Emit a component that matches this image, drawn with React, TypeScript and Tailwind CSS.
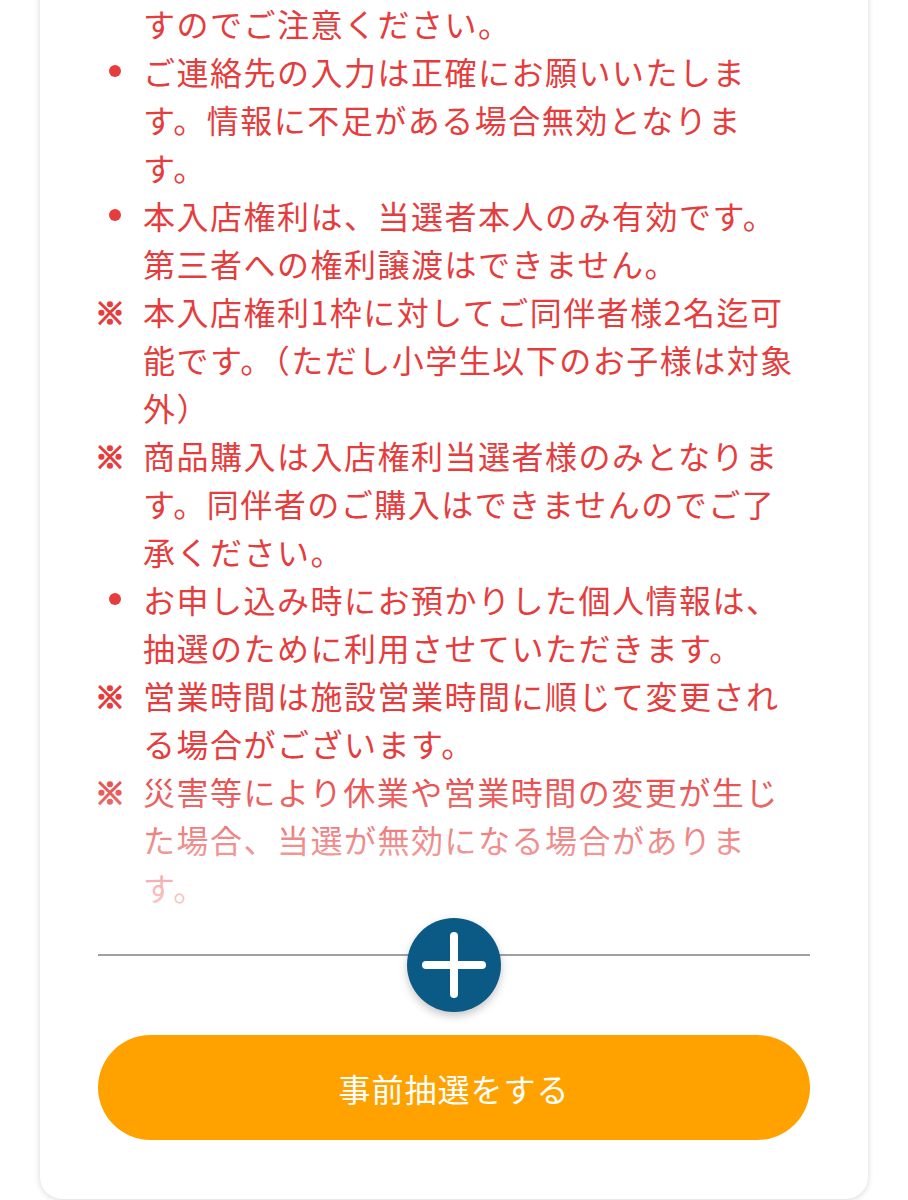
import React from "react";

type Item = { marker: "dot" | "kome" | "none"; lines: string[] };

const items: Item[] = [
  { marker: "none", lines: ["すのでご注意ください。"] },
  { marker: "dot", lines: ["ご連絡先の入力は正確にお願いいたしま", "す。情報に不足がある場合無効となりま", "す。"] },
  { marker: "dot", lines: ["本入店権利は、当選者本人のみ有効です。", "第三者への権利譲渡はできません。"] },
  { marker: "kome", lines: ["本入店権利1枠に対してご同伴者様2名迄可", "能です。（ただし小学生以下のお子様は対象", "外）"] },
  { marker: "kome", lines: ["商品購入は入店権利当選者様のみとなりま", "す。同伴者のご購入はできませんのでご了", "承ください。"] },
  { marker: "dot", lines: ["お申し込み時にお預かりした個人情報は、", "抽選のために利用させていただきます。"] },
  { marker: "kome", lines: ["営業時間は施設営業時間に順じて変更され", "る場合がございます。"] },
  { marker: "kome", lines: ["災害等により休業や営業時間の変更が生じ", "た場合、当選が無効になる場合がありま", "す。"] },
];

function Marker({ kind }: { kind: Item["marker"] }) {
  if (kind === "dot") {
    return (
      <div className="h-[48px] flex items-center">
        <div className="ml-[11px] w-[12px] h-[12px] rounded-full bg-[#e53d3d]" />
      </div>
    );
  }
  if (kind === "kome") {
    return (
      <div className="h-[48px] flex items-center">
        <span className="ml-[-3px] text-[30px] font-bold leading-none text-[#e53d3d] [-webkit-text-stroke:1.6px_#e53d3d]">
          ※
        </span>
      </div>
    );
  }
  return <div />;
}

export default function App() {
  return (
    <div
      className="min-h-[1200px] bg-white overflow-hidden"
      style={{ fontFamily: '"Noto Sans CJK JP", "Noto Sans", sans-serif' }}
    >
      <div className="mx-[40px] mt-[-40px] w-[828px] rounded-b-[22px] bg-white shadow-[0_1px_6px_rgba(0,0,0,0.16)] px-[58px] pt-[39px] pb-[59px]">
        <div className="relative">
          <ul className="flex flex-col">
            {items.map((it, i) => (
              <li key={i} className="grid grid-cols-[45px_666px]">
                <Marker kind={it.marker} />
                <div className="text-[32px] leading-[48px] tracking-[1.5px] text-[#e53d3d]">
                  {it.lines.map((l, j) => (
                    <div key={j} className="whitespace-nowrap">
                      {l}
                    </div>
                  ))}
                </div>
              </li>
            ))}
          </ul>
          <div className="pointer-events-none absolute left-0 right-0 bottom-0 h-[150px] bg-linear-to-b from-white/0 to-white/75" />
        </div>

        <div className="relative mt-[43px] h-[2px] bg-[#9ea1a8]">
          <div className="absolute left-1/2 -translate-x-1/2 top-[-36px] w-[94px] h-[94px] rounded-full bg-[#0b5985] shadow-[0_4px_8px_rgba(0,0,0,0.22)] flex items-center justify-center">
            <svg width="64" height="66" viewBox="0 0 64 66">
              <line x1="4" y1="33" x2="60" y2="33" stroke="white" strokeWidth="8" strokeLinecap="round" />
              <line x1="32" y1="4" x2="32" y2="62" stroke="white" strokeWidth="8" strokeLinecap="round" />
            </svg>
          </div>
        </div>

        <button className="mt-[79px] w-full h-[105px] rounded-full bg-[#ffa200] text-white text-[32px] tracking-[1px] flex items-center justify-center">
          事前抽選をする
        </button>
      </div>
    </div>
  );
}
